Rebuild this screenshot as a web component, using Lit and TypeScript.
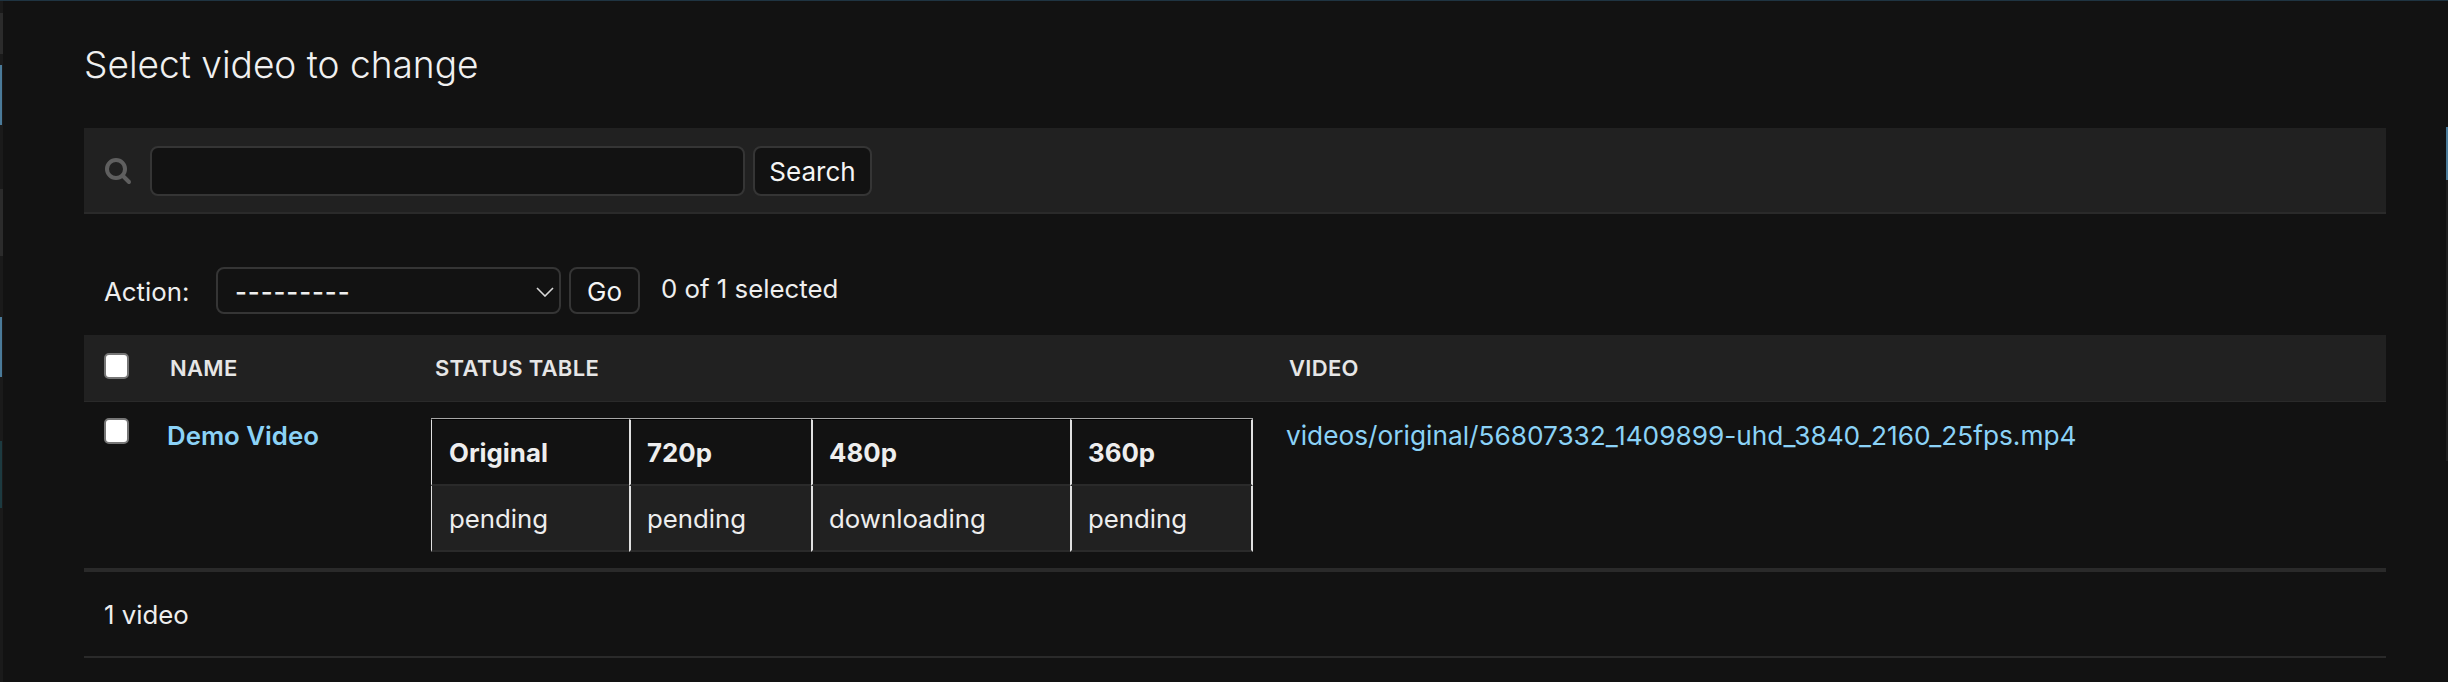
import { LitElement, html, css } from "lit";
import { customElement } from "lit/decorators.js";

const COLS = [
  { head: "Original", value: "pending" },
  { head: "720p", value: "pending" },
  { head: "480p", value: "downloading" },
  { head: "360p", value: "pending" },
];

@customElement("app-root")
export class AppRoot extends LitElement {
  static styles = css`
    :host {
      display: block;
      position: relative;
      width: 2448px;
      height: 682px;
      overflow: hidden;
      background: #121212;
      color: #eeeeee;
      font-family: Inter, "Liberation Sans", sans-serif;
      font-size: 25.8px;
      box-sizing: border-box;
    }
    * { box-sizing: border-box; }
    .topline { height: 1px; background: #1f3442; }
    .content { padding: 0 62px 0 84px; }
    h1 {
      margin: 0;
      padding-top: 41px;
      height: 127px;
      font-size: 37.1px;
      line-height: 46px;
      font-weight: 300;
      color: #f0f0f0;
    }
    .searchbar {
      height: 86px;
      background: #212121;
      border-bottom: 2px solid #2a2a2a;
      display: flex;
      align-items: center;
      padding: 2px 0 0 20px;
    }
    .searchbar svg { width: 28px; height: 28px; margin-right: 18px; flex: none; }
    .input {
      width: 595px;
      height: 50px;
      background: #121212;
      border: 2px solid #353535;
      border-radius: 8px;
    }
    .btn {
      height: 50px;
      background: #121212;
      border: 2px solid #353535;
      border-radius: 8px;
      display: flex;
      align-items: center;
      justify-content: center;
      color: #f5f5f5;
      font-size: 26px;
    }
    .search-btn { width: 119px; margin-left: 8px; }
    .actions {
      display: flex;
      align-items: center;
      height: 121px;
      padding: 32px 0 0 20px;
    }
    .actions .label { width: 112px; margin-top: 2px; }
    .select {
      width: 345px;
      height: 47px;
      background: #121212;
      border: 2px solid #353535;
      border-radius: 8px;
      padding: 2px 5px 0 17px;
      display: flex;
      align-items: center;
      justify-content: space-between;
      letter-spacing: 0.9px;
      font-weight: 500;
    }
    .select svg { width: 18px; height: 10px; }
    .go { width: 71px; height: 47px; margin-left: 8px; padding-top: 2px; }
    .count { margin: -4px 0 0 21px; }
    .head {
      display: flex;
      height: 67px;
      background: #212121;
      border-bottom: 1px solid #2a2a2a;
      align-items: center;
      font-size: 22px;
      font-weight: 600;
      color: #e6e6e6;
      letter-spacing: 0.3px;
    }
    .box {
      width: 25px;
      height: 26px;
      background: #ffffff;
      border: 2px solid #767676;
      border-radius: 5px;
      flex: none;
    }
    .head .box { margin: 0 0 4px 20px; }
    .hname { margin-left: 41px; width: 265px; }
    .hstatus { width: 854px; }
    .row {
      display: flex;
      align-items: flex-start;
      height: 170px;
      padding-top: 16px;
      border-bottom: 4px solid #2a2a2a;
    }
    .row .box { margin-left: 20px; }
    .name {
      margin: 0 0 0 38px;
      width: 265px;
      padding-top: 2px;
      color: #8bd2f7;
      font-weight: 600;
      text-decoration: none;
    }
    .link {
      margin-left: 33px;
      padding-top: 2px;
      color: #8bd2f7;
      font-size: 26.25px;
      text-decoration: none;
      white-space: nowrap;
    }
    .status {
      width: 822px;
      flex: none;
      margin-left: -1px;
      border-top: 1px solid #a6a6a6;
      display: grid;
      grid-template-columns: 198px 182px 259px 183px;
    }
    .cell {
      height: 66px;
      border-left: 2px solid #e0e0e0;
      border-bottom: 2px solid #2a2a2a;
      padding: 0 0 0 16px;
      display: flex;
      align-items: center;
      background: #121212;
    }
    .cell:first-child, .cell:nth-child(4n + 1) { border-left-width: 1px; padding-left: 17px; }
    .cell:nth-child(4n) { border-right: 2px solid #e0e0e0; }
    .cell.th { font-weight: 700; height: 67px; border-top: 1px solid #000000; }
    .cell.td { background: #212121; }
    .paginator {
      height: 86px;
      border-bottom: 2px solid #2a2a2a;
      display: flex;
      align-items: center;
      padding-left: 20px;
    }
    .edge { position: absolute; }
    .strip-left { left: 0; top: 1px; width: 3px; height: 681px; background: #1a1a1a; }
    .strip-right { right: 0; top: 180px; width: 2px; height: 281px; background: #1f1f1f; }
    .gray1 { left: 0; top: 13px; width: 3px; height: 41px; background: #2b2b2b; }
    .gray2 { left: 0; top: 189px; width: 3px; height: 67px; background: #2b2b2b; }
    .blue1 { left: 0; top: 65px; width: 2px; height: 60px; background: #4a7a99; }
    .blue2 { left: 0; top: 317px; width: 2px; height: 60px; background: #4a7a99; }
    .teal { left: 0; top: 441px; width: 2px; height: 67px; background: #1c3a40; }
    .blue3 { right: 0; top: 127px; width: 2px; height: 53px; background: #4a7a99; }
  `;

  render() {
    return html`
      <div class="topline"></div>
      <div class="content">
        <h1>Select video to change</h1>
        <div class="searchbar">
          <svg viewBox="0 0 28 28" fill="none" stroke="#5f5f5f" stroke-linecap="round">
            <circle cx="12" cy="12" r="9" stroke-width="4"></circle>
            <path d="M19 19l6 6" stroke-width="4"></path>
          </svg>
          <div class="input"></div>
          <div class="btn search-btn">Search</div>
        </div>
        <div class="actions">
          <span class="label">Action:</span>
          <div class="select">
            <span>---------</span>
            <svg viewBox="0 0 18 10" fill="none" stroke="#d8d8d8" stroke-width="1.6"><path d="M1 1l8 8 8-8"></path></svg>
          </div>
          <div class="btn go">Go</div>
          <span class="count">0 of 1 selected</span>
        </div>
        <div class="head">
          <div class="box"></div>
          <div class="hname">NAME</div>
          <div class="hstatus">STATUS TABLE</div>
          <div>VIDEO</div>
        </div>
        <div class="row">
          <div class="box"></div>
          <a class="name">Demo Video</a>
          <div class="status">
            ${COLS.map((c) => html`<div class="cell th">${c.head}</div>`)}
            ${COLS.map((c) => html`<div class="cell td">${c.value}</div>`)}
          </div>
          <a class="link">videos/original/56807332_1409899-uhd_3840_2160_25fps.mp4</a>
        </div>
        <div class="paginator">1 video</div>
      </div>
      <div class="edge strip-left"></div>
      <div class="edge strip-right"></div>
      <div class="edge gray1"></div>
      <div class="edge gray2"></div>
      <div class="edge blue1"></div>
      <div class="edge blue2"></div>
      <div class="edge teal"></div>
      <div class="edge blue3"></div>
    `;
  }
}
